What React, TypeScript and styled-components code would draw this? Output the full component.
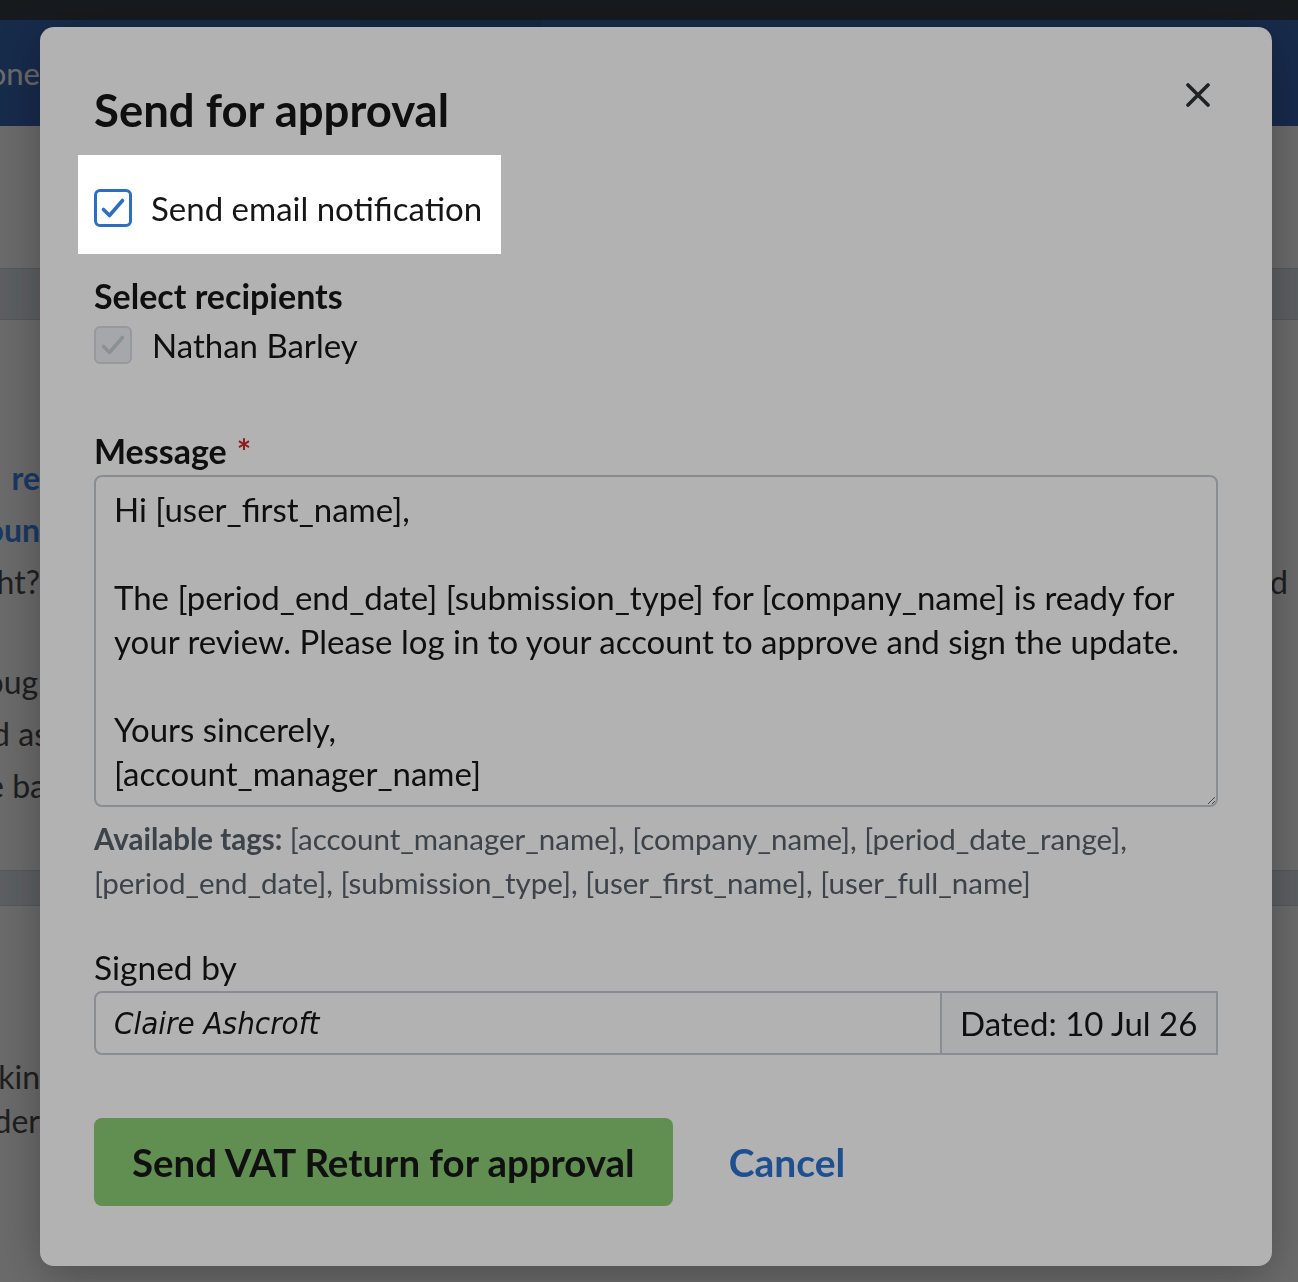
import React from "react";
import styled, { createGlobalStyle } from "styled-components";

const GlobalStyle = createGlobalStyle`
  html, body { margin: 0; padding: 0; }
  body {
    width: 1298px;
    height: 1282px;
    overflow: hidden;
    background: #ffffff;
    font-family: Lato, "Noto Sans", sans-serif;
    color: #1a1a1a;
  }
  *, *::before, *::after { box-sizing: border-box; }
`;

/* ---------- page behind the dialog ---------- */

const Page = styled.div`
  width: 1298px;
  height: 1282px;
  display: flex;
  flex-direction: column;
  background: #ffffff;
`;

const TopStrip = styled.div`
  height: 20px;
  flex-shrink: 0;
  background: #373e47;
`;

const NavBar = styled.nav`
  height: 106px;
  flex-shrink: 0;
  display: flex;
  align-items: stretch;
  background: #3766b3;
`;

const NavItem = styled.div<{ $width: number; $active?: boolean }>`
  width: ${(p) => p.$width}px;
  flex-shrink: 0;
  display: flex;
  align-items: center;
  justify-content: flex-end;
  overflow: hidden;
  white-space: nowrap;
  font-size: 31px;
  color: #ffffff;
  background: ${(p) => (p.$active ? "#3260a8" : "transparent")};
`;

const Band = styled.div<{ $top: number; $height: number }>`
  margin-top: ${(p) => p.$top}px;
  height: ${(p) => p.$height}px;
  flex-shrink: 0;
  background: #dde3ea;
  border-top: 1px solid #c9d1db;
  border-bottom: 1px solid #c9d1db;
`;

const TextBlock = styled.div<{ $top: number }>`
  margin-top: ${(p) => p.$top}px;
  display: flex;
  flex-direction: column;
`;

const PageLine = styled.div<{ $lh: number }>`
  height: ${(p) => p.$lh}px;
  display: flex;
  justify-content: space-between;
  align-items: center;
  font-size: 32px;
  line-height: ${(p) => p.$lh}px;
`;

const Fragment = styled.div<{ $width: number; $strong?: boolean; $pad?: number }>`
  width: ${(p) => p.$width}px;
  padding-right: ${(p) => p.$pad ?? 0}px;
  display: flex;
  justify-content: flex-end;
  overflow: hidden;
  white-space: pre;
  color: ${(p) => (p.$strong ? "#3f86ee" : "#4a4a4a")};
  font-weight: ${(p) => (p.$strong ? 700 : 400)};
`;

/* ---------- dialog ---------- */

const Backdrop = styled.div`
  position: fixed;
  inset: 0;
  background: rgba(0, 0, 0, 0.4);
`;

const ModalLayer = styled.div`
  position: fixed;
  inset: 0;
  padding: 27px 0 0 40px;
  display: flex;
  align-items: flex-start;
`;

const Modal = styled.div`
  position: relative;
  z-index: 1;
  width: 1232px;
  padding: 48px 54px 60px;
  display: flex;
  flex-direction: column;
  background: #ffffff;
  border-radius: 14px;
  box-shadow: 0 10px 50px rgba(0, 0, 0, 0.3);
`;

const Header = styled.div`
  display: flex;
  justify-content: space-between;
  align-items: flex-start;
`;

const Title = styled.h2`
  margin: 11px 0 0;
  font-size: 45.5px;
  line-height: 48px;
  font-weight: 700;
  color: #161616;
`;

const CloseButton = styled.button`
  width: 40px;
  height: 40px;
  padding: 0;
  border: none;
  background: transparent;
  display: flex;
  align-items: center;
  justify-content: center;
  color: #2b3136;
  cursor: pointer;
`;

/* highlighted step of the product tour: dims everything around it */
const Spotlight = styled.div`
  position: relative;
  z-index: 2;
  align-self: flex-start;
  margin: 21px 0 0 -16px;
  padding: 34px 19px 27px 16px;
  display: flex;
  align-items: center;
  gap: 19px;
  background: #ffffff;
  box-shadow: 0 0 0 4000px rgba(0, 0, 0, 0.3);
`;

const CheckBox = styled.span<{ $disabled?: boolean }>`
  width: 38px;
  height: 38px;
  flex-shrink: 0;
  display: flex;
  align-items: center;
  justify-content: center;
  border-radius: 6px;
  border: ${(p) => (p.$disabled ? "2px solid #d8dce2" : "3px solid #2d6ec3")};
  background: ${(p) => (p.$disabled ? "#eef0f4" : "#ffffff")};
  color: ${(p) => (p.$disabled ? "#c8ced4" : "#2d6ec3")};
`;

const CheckText = styled.span`
  font-size: 33px;
  line-height: 38px;
  color: #161616;
`;

const SectionLabel = styled.div<{ $top: number }>`
  margin-top: ${(p) => p.$top}px;
  font-size: 34px;
  line-height: 38px;
  font-weight: 700;
  color: #161616;
`;

const Required = styled.span`
  margin-left: 10px;
  color: #cc2525;
`;

const RecipientRow = styled.label`
  margin-top: 11px;
  display: flex;
  align-items: center;
  gap: 20px;
`;

const MessageBox = styled.textarea`
  margin-top: 5px;
  width: 100%;
  height: 332px;
  padding: 10px 18px;
  border: 2px solid #c4cad0;
  border-radius: 8px;
  background: #ffffff;
  font-family: Lato, "Noto Sans", sans-serif;
  font-size: 33px;
  line-height: 44px;
  color: #161616;
  resize: vertical;
  outline: none;
`;

const TagsHelp = styled.p`
  margin: 10px 0 0;
  font-size: 29.5px;
  line-height: 44px;
  color: #57606b;

  strong {
    font-weight: 700;
  }
`;

const FieldLabel = styled.div`
  margin-top: 43px;
  font-size: 33.5px;
  line-height: 38px;
  color: #161616;
`;

const InputGroup = styled.div`
  margin-top: 5px;
  height: 64px;
  display: flex;
  border: 2px solid #c4cad0;
  border-radius: 8px 0 0 8px;
`;

const Signature = styled.div`
  flex: 1;
  display: flex;
  align-items: center;
  padding-left: 18px;
  font-family: "DejaVu Sans Condensed", "DejaVu Sans", sans-serif;
  font-style: italic;
  font-size: 31px;
  color: #161616;
`;

const DatedAddon = styled.div`
  width: 276px;
  display: flex;
  align-items: center;
  padding: 0 18px;
  border-left: 2px solid #c4cad0;
  background: #f4f6fa;
  font-size: 33px;
  color: #161616;
`;

const Footer = styled.div`
  margin-top: 63px;
  display: flex;
  align-items: center;
  gap: 56px;
`;

const PrimaryButton = styled.button`
  height: 88px;
  padding: 0 38px;
  border: none;
  border-radius: 8px;
  background: #8bcc75;
  font-family: Lato, "Noto Sans", sans-serif;
  font-size: 38.4px;
  font-weight: 700;
  color: #181818;
  cursor: pointer;
`;

const CancelLink = styled.a`
  font-size: 39px;
  font-weight: 700;
  color: #2c71cc;
  text-decoration: none;
  cursor: pointer;
`;

const CheckMark = () => (
  <svg width="26" height="26" viewBox="0 0 26 26" fill="none">
    <path
      d="M3.5 14.5 L9.5 20.5 L22.5 5.5"
      stroke="currentColor"
      strokeWidth="3.6"
      strokeLinecap="round"
      strokeLinejoin="round"
    />
  </svg>
);

const CloseIcon = () => (
  <svg width="24" height="24" viewBox="0 0 24 24" fill="none">
    <path
      d="M2 2 L22 22 M22 2 L2 22"
      stroke="currentColor"
      strokeWidth="3.6"
      strokeLinecap="round"
    />
  </svg>
);

const message = `Hi [user_first_name],

The [period_end_date] [submission_type] for [company_name] is ready for your review. Please log in to your account to approve and sign the update.

Yours sincerely,
[account_manager_name]`;

export default function App() {
  return (
    <>
      <GlobalStyle />
      <Page>
        <TopStrip />
        <NavBar>
          <NavItem $width={40}>Phone</NavItem>
          <NavItem $width={320} />
          <NavItem $width={182} $active />
        </NavBar>
        <Band $top={142} $height={52} />
        <TextBlock $top={132}>
          <PageLine $lh={52}>
            <Fragment $width={40} $strong>{"Quarterly    re"}</Fragment>
          </PageLine>
          <PageLine $lh={52}>
            <Fragment $width={40} $strong>Bank accoun</Fragment>
          </PageLine>
          <PageLine $lh={52}>
            <Fragment $width={40}>Does this look right?</Fragment>
            <Fragment $width={26} $pad={10}>and</Fragment>
          </PageLine>
        </TextBlock>
        <TextBlock $top={48}>
          <PageLine $lh={52}>
            <Fragment $width={56}>We go through</Fragment>
          </PageLine>
          <PageLine $lh={52}>
            <Fragment $width={48}>it is marked as</Fragment>
          </PageLine>
          <PageLine $lh={52}>
            <Fragment $width={46}>sent to the ba</Fragment>
          </PageLine>
        </TextBlock>
        <Band $top={58} $height={36} />
        <TextBlock $top={149}>
          <PageLine $lh={44}>
            <Fragment $width={40}>thinkin</Fragment>
          </PageLine>
          <PageLine $lh={44}>
            <Fragment $width={40}>under</Fragment>
          </PageLine>
        </TextBlock>
      </Page>

      <Backdrop />

      <ModalLayer>
        <Modal role="dialog" aria-modal="true">
          <Header>
            <Title>Send for approval</Title>
            <CloseButton aria-label="Close">
              <CloseIcon />
            </CloseButton>
          </Header>

          <Spotlight>
            <CheckBox>
              <CheckMark />
            </CheckBox>
            <CheckText>Send email notification</CheckText>
          </Spotlight>

          <SectionLabel $top={23}>Select recipients</SectionLabel>
          <RecipientRow>
            <CheckBox $disabled>
              <CheckMark />
            </CheckBox>
            <CheckText>Nathan Barley</CheckText>
          </RecipientRow>

          <SectionLabel $top={68}>
            Message<Required>*</Required>
          </SectionLabel>
          <MessageBox value={message} readOnly rows={7} />
          <TagsHelp>
            <strong>Available tags:</strong> [account_manager_name], [company_name],
            [period_date_range], [period_end_date], [submission_type], [user_first_name],
            [user_full_name]
          </TagsHelp>

          <FieldLabel>Signed by</FieldLabel>
          <InputGroup>
            <Signature>Claire Ashcroft</Signature>
            <DatedAddon>Dated: 10 Jul 26</DatedAddon>
          </InputGroup>

          <Footer>
            <PrimaryButton>Send VAT Return for approval</PrimaryButton>
            <CancelLink>Cancel</CancelLink>
          </Footer>
        </Modal>
      </ModalLayer>
    </>
  );
}
